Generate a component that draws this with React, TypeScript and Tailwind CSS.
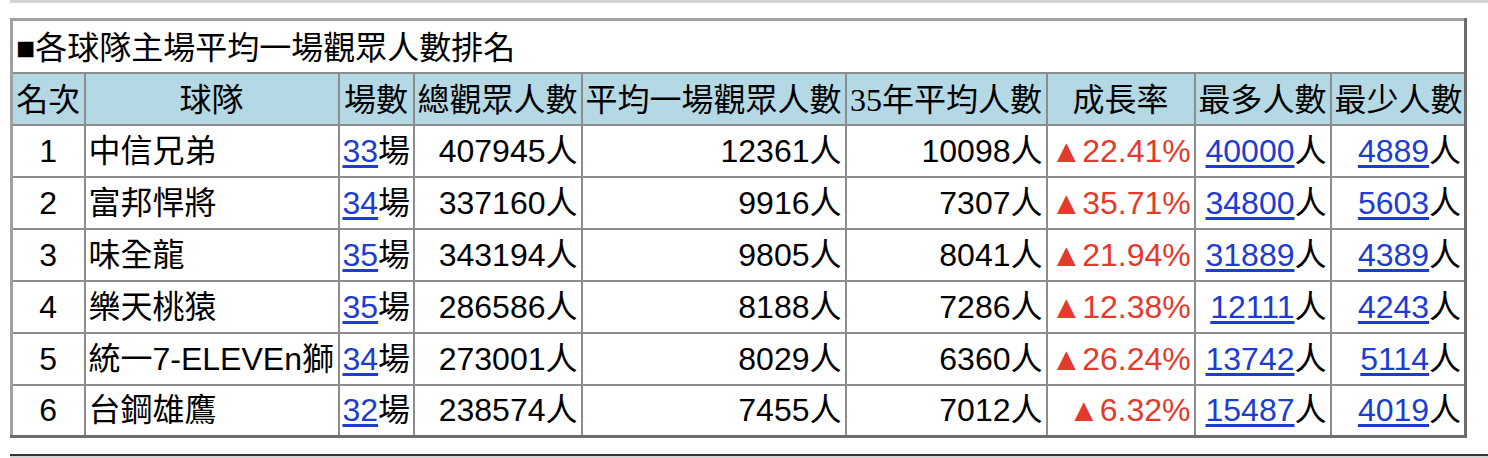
import React from "react"

type Row = {
	rank: number
	team: string
	games: number
	total: number
	avg: number
	avg35: number
	growth: string
	max: number
	min: number
}

const rows: Row[] = [
	{ rank: 1, team: "中信兄弟", games: 33, total: 407945, avg: 12361, avg35: 10098, growth: "22.41%", max: 40000, min: 4889 },
	{ rank: 2, team: "富邦悍將", games: 34, total: 337160, avg: 9916, avg35: 7307, growth: "35.71%", max: 34800, min: 5603 },
	{ rank: 3, team: "味全龍", games: 35, total: 343194, avg: 9805, avg35: 8041, growth: "21.94%", max: 31889, min: 4389 },
	{ rank: 4, team: "樂天桃猿", games: 35, total: 286586, avg: 8188, avg35: 7286, growth: "12.38%", max: 12111, min: 4243 },
	{ rank: 5, team: "統一7-ELEVEn獅", games: 34, total: 273001, avg: 8029, avg35: 6360, growth: "26.24%", max: 13742, min: 5114 },
	{ rank: 6, team: "台鋼雄鷹", games: 32, total: 238574, avg: 7455, avg35: 7012, growth: "6.32%", max: 15487, min: 4019 },
]

const headers = ["名次", "球隊", "場數", "總觀眾人數", "平均一場觀眾人數", "35年平均人數", "成長率", "最多人數", "最少人數"]
const widths = [73, 254, 75, 168, 264, 201, 148, 136, 135]

const serif = "font-['Liberation_Serif','Noto_Sans_CJK_TC',serif]"
const sans = "font-['Liberation_Sans','Noto_Sans_CJK_TC',sans-serif]"

const cell = "border-2 border-[#8c8c8c] px-[3px] py-0 text-[32px] leading-[38px] whitespace-nowrap"

function Link({ children }: { children: React.ReactNode }) {
	return <a className="text-[#1c3cd2] underline underline-offset-[3px]">{children}</a>
}

export default function App() {
	return (
		<div className="bg-white w-[1488px] h-[458px] overflow-hidden text-black">
			<div className="ml-[10px] h-[3px] bg-[#d4d4d4]" />
			<table
				className={`ml-[10px] mt-[15px] table-fixed border-collapse border-[3px] border-t-[#a0a0a0] border-l-[#a0a0a0] border-r-[#6c6c6c] border-b-[#6c6c6c] w-[1454px] ${sans}`}
			>
				<colgroup>
					{widths.map((w, i) => (
						<col key={i} style={{ width: w }} />
					))}
				</colgroup>
				<tbody>
					<tr className="h-[53px]">
						<td colSpan={9} className={`${cell} ${serif} text-left px-[2px] pt-[4px]`}>
							■各球隊主場平均一場觀眾人數排名
						</td>
					</tr>
					<tr className="h-[52px] bg-[#b5d8e5]">
						{headers.map((h) => (
							<th key={h} className={`${cell} ${serif} font-normal text-center px-0 pt-[3px]`}>
								{h}
							</th>
						))}
					</tr>
					{rows.map((r) => (
						<tr key={r.rank} className="h-[52px]">
							<td className={`${cell} text-center`}>{r.rank}</td>
							<td className={`${cell} text-left`}>{r.team}</td>
							<td className={`${cell} text-left px-[2px]`}>
								<Link>{r.games}</Link>場
							</td>
							<td className={`${cell} text-right`}>{r.total}人</td>
							<td className={`${cell} text-right`}>{r.avg}人</td>
							<td className={`${cell} text-right`}>{r.avg35}人</td>
							<td className={`${cell} text-right text-[#e23a2c]`}>▲{r.growth}</td>
							<td className={`${cell} text-right`}>
								<Link>{r.max}</Link>人
							</td>
							<td className={`${cell} text-right`}>
								<Link>{r.min}</Link>人
							</td>
						</tr>
					))}
				</tbody>
			</table>
			<div className="ml-[10px] mt-[16px] h-[2px] bg-[#333333]" />
			<div className="ml-[10px] h-[3px] bg-[#d4d4d4]" />
		</div>
	)
}
